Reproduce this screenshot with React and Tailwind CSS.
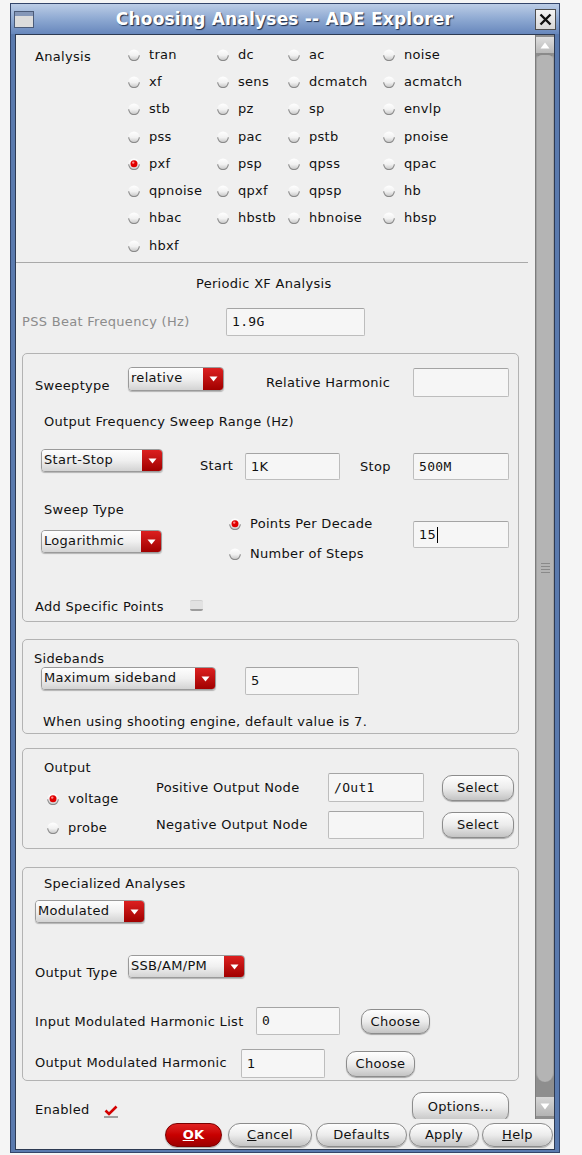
import React from "react";

const Radio = ({ checked }) => (
  <svg width="12" height="12" viewBox="0 0 12 12" className="shrink-0">
    <defs>
      <linearGradient id="radg" x1="0" y1="0" x2="0" y2="1">
        <stop offset="0" stopColor="#ffffff" />
        <stop offset="0.55" stopColor="#f1f1f1" />
        <stop offset="1" stopColor="#c4c4c4" />
      </linearGradient>
    </defs>
    <circle cx="6" cy="6" r="5.6" fill="url(#radg)" />
    <path d="M0.7 6.3 A5.3 5.3 0 0 0 11.3 6.3" fill="none" stroke="#8a8a8a" strokeWidth="1.1" />
    {checked && (
      <>
        <circle cx="6" cy="5.7" r="3.5" fill="#e00000" />
        <circle cx="5.2" cy="4.6" r="1.2" fill="#ff8a8a" />
      </>
    )}
  </svg>
);

const Dropdown = ({ label, className }) => (
  <div className={`flex rounded-[4px] border border-[#9a9a9a] overflow-hidden shadow-[0_1px_1px_rgba(0,0,0,0.25)] ${className}`}>
    <div className="flex-1 flex items-center pl-[2px] pb-[2px] bg-linear-to-b from-[#fefefe] via-[#f0f0f0] to-[#d3d3d3] whitespace-nowrap overflow-hidden">
      {label}
    </div>
    <div className="w-[20px] flex items-center justify-center bg-linear-to-b from-[#dc1f1f] to-[#a10000]">
      <svg width="9" height="6" viewBox="0 0 9 6">
        <path d="M0.5 0.5 L8.5 0.5 L4.5 5.5 Z" fill="#ffffff" />
      </svg>
    </div>
  </div>
);

const Field = ({ value, className = "", mono, children }) => (
  <div
    className={`flex items-center rounded-[2px] border border-[#bdbdbd] border-t-[#a4a4a4] bg-[#f6f6f6] pl-[5px] whitespace-nowrap ${
      mono ? "font-['DejaVu_Sans_Mono',monospace]" : ""
    } ${className}`}
  >
    {value}
    {children}
  </div>
);

const Btn = ({ children, className = "" }) => (
  <div
    className={`flex items-center justify-center rounded-[10px] border border-[#8c8c8c] bg-linear-to-b from-[#fefefe] via-[#ececec] to-[#c4c4c4] shadow-[0_1px_1px_rgba(0,0,0,0.3)] whitespace-nowrap ${className}`}
  >
    {children}
  </div>
);

const analyses = [
  "tran", "dc", "ac", "noise",
  "xf", "sens", "dcmatch", "acmatch",
  "stb", "pz", "sp", "envlp",
  "pss", "pac", "pstb", "pnoise",
  "pxf", "psp", "qpss", "qpac",
  "qpnoise", "qpxf", "qpsp", "hb",
  "hbac", "hbstb", "hbnoise", "hbsp",
  "hbxf",
];

export default function App() {
  return (
    <div className="w-[582px] h-[1155px] bg-[#f5f5f5] font-['DejaVu_Sans',sans-serif] text-[13px] leading-[16px] tracking-[0.3px] text-[#111111] pt-[3px] pl-[10px] overflow-hidden">
      <div className="w-[550px] h-[1150px] flex flex-col border border-[#33456a] bg-[#5a7aae]">
        {/* Title bar */}
        <div className="h-[30px] shrink-0 flex items-center bg-linear-to-b from-[#bccde6] via-[#8ea9d2] to-[#6787bc]">
          <div className="ml-[3px] w-[20px] h-[17px] border border-[#4b5b78] bg-[#dcdcdc] flex flex-col">
            <div className="h-[4px] bg-[#8597b8]" />
          </div>
          <div className="flex-1 text-center text-white font-bold text-[17px] leading-[20px] [text-shadow:1px_1px_1px_#1d2c48] tracking-[0.2px]">
            Choosing Analyses -- ADE Explorer
          </div>
          <div className="mr-[3px] w-[21px] h-[21px] border border-[#4d4d4d] bg-linear-to-b from-[#f4f4f4] to-[#d8d8d8] flex items-center justify-center">
            <svg width="13" height="13" viewBox="0 0 13 13">
              <path d="M1.5 1.5 L11.5 11.5 M11.5 1.5 L1.5 11.5" stroke="#111" strokeWidth="2.4" />
            </svg>
          </div>
        </div>

        {/* Body */}
        <div className="flex-1 flex flex-col px-[4px] pb-[2px]">
          <div className="flex-1 flex flex-col bg-[#efefef] border border-[#2d3a52]">
            {/* Scroll area */}
            <div className="h-[1084px] shrink-0 flex">
              <div className="w-[519px] h-full overflow-hidden flex flex-col">
                {/* Analysis */}
                <div className="h-[227px] shrink-0 flex">
                  <div className="w-[112px] pl-[19px] pt-[14px]">Analysis</div>
                  <div className="pt-[6px] grid grid-cols-[89px_71px_95px_100px] auto-rows-[27.3px]">
                    {analyses.map((a) => (
                      <div key={a} className="flex items-center gap-[9px]">
                        <Radio checked={a === "pxf"} />
                        <span>{a}</span>
                      </div>
                    ))}
                  </div>
                </div>
                <div className="h-px w-[512px] shrink-0 bg-[#a9a9a9]" />

                <div className="mt-[13px] pl-[180px] shrink-0">Periodic XF Analysis</div>

                <div className="mt-[16px] h-[28px] shrink-0 flex items-center">
                  <div className="w-[210px] pl-[6px] text-[#8c8c8c]">PSS Beat Frequency (Hz)</div>
                  <Field value="1.9G" mono className="w-[139px] h-[28px]" />
                </div>

                {/* Sweep group */}
                <div className="mt-[17px] ml-[6px] w-[497px] h-[269px] shrink-0 border border-[#b3b3b3] rounded-[5px] flex flex-col">
                  <div className="mt-[13px] h-[30px] flex">
                    <div className="w-[105px] pl-[12px] pt-[11px]">Sweeptype</div>
                    <Dropdown label="relative" className="w-[96px] h-[24px]" />
                    <div className="w-[189px] pl-[42px] pt-[8px]">Relative Harmonic</div>
                    <Field value="" className="w-[96px] h-[29px] mt-[1px]" />
                  </div>
                  <div className="mt-[17px] pl-[21px]">Output Frequency Sweep Range (Hz)</div>
                  <div className="mt-[19px] h-[31px] flex">
                    <Dropdown label="Start-Stop" className="ml-[18px] w-[122px] h-[23px]" />
                    <div className="w-[82px] pl-[37px] pt-[9px]">Start</div>
                    <Field value="1K" className="w-[95px] h-[27px] mt-[4px]" />
                    <div className="w-[73px] pl-[20px] pt-[10px]">Stop</div>
                    <Field value="500M" mono className="w-[96px] h-[27px] mt-[4px]" />
                  </div>
                  <div className="mt-[22px] pl-[21px]">Sweep Type</div>
                  <div className="h-[42px] flex">
                    <div className="w-[206px] pl-[18px] pt-[12px]">
                      <Dropdown label="Logarithmic" className="w-[121px] h-[23px]" />
                    </div>
                    <div className="w-[184px] flex flex-col">
                      <div className="h-[12px] flex items-center gap-[9px]">
                        <Radio checked />
                        <span>Points Per Decade</span>
                      </div>
                      <div className="mt-[18px] h-[12px] flex items-center gap-[9px]">
                        <Radio />
                        <span>Number of Steps</span>
                      </div>
                    </div>
                    <Field value="15" className="w-[96px] h-[27px] mt-[3px]">
                      <div className="w-px h-[16px] bg-black ml-[1px]" />
                    </Field>
                  </div>
                  <div className="mt-[39px] h-[16px] flex items-center">
                    <div className="w-[167px] pl-[12px]">Add Specific Points</div>
                    <div className="w-[13px] h-[11px] -mt-[3px] rounded-[2px] bg-[#e2e2e2] border-t border-[#cfcfcf] border-b-2 border-b-[#9c9c9c]" />
                  </div>
                </div>

                {/* Sidebands */}
                <div className="mt-[17px] ml-[6px] w-[497px] h-[95px] shrink-0 border border-[#b3b3b3] rounded-[5px] flex flex-col">
                  <div className="mt-[11px] pl-[11px]">Sidebands</div>
                  <div className="flex">
                    <Dropdown label="Maximum sideband" className="ml-[18px] w-[175px] h-[23px]" />
                    <Field value="5" className="ml-[29px] w-[114px] h-[28px]" />
                  </div>
                  <div className="mt-[19px] pl-[20px]">When using shooting engine, default value is 7.</div>
                </div>

                {/* Output */}
                <div className="mt-[14px] ml-[6px] w-[497px] h-[101px] shrink-0 border border-[#b3b3b3] rounded-[5px] flex">
                  <div className="w-[133px] flex flex-col">
                    <div className="mt-[11px] pl-[21px]">Output</div>
                    <div className="mt-[17px] h-[12px] pl-[24px] flex items-center gap-[9px]">
                      <Radio checked />
                      <span>voltage</span>
                    </div>
                    <div className="mt-[17px] h-[12px] pl-[24px] flex items-center gap-[9px]">
                      <Radio />
                      <span>probe</span>
                    </div>
                  </div>
                  <div className="w-[172px] flex flex-col">
                    <div className="mt-[31px]">Positive Output Node</div>
                    <div className="mt-[21px]">Negative Output Node</div>
                  </div>
                  <div className="w-[114px] flex flex-col">
                    <Field value="/Out1" mono className="mt-[24px] w-[96px] h-[29px]" />
                    <Field value="" className="mt-[9px] w-[96px] h-[28px]" />
                  </div>
                  <div className="flex flex-col">
                    <Btn className="mt-[26px] w-[72px] h-[26px]">Select</Btn>
                    <Btn className="mt-[11px] w-[72px] h-[26px]">Select</Btn>
                  </div>
                </div>

                {/* Specialized */}
                <div className="mt-[18px] ml-[6px] w-[497px] h-[214px] shrink-0 border border-[#b3b3b3] rounded-[5px] flex flex-col">
                  <div className="mt-[8px] pl-[21px]">Specialized Analyses</div>
                  <Dropdown label="Modulated" className="mt-[8px] ml-[12px] w-[110px] h-[23px]" />
                  <div className="mt-[32px] h-[23px] flex">
                    <div className="w-[105px] pl-[12px] pt-[10px]">Output Type</div>
                    <Dropdown label="SSB/AM/PM" className="w-[117px] h-[23px]" />
                  </div>
                  <div className="mt-[29px] h-[28px] flex">
                    <div className="w-[233px] pl-[12px] pt-[7px] whitespace-nowrap">Input Modulated Harmonic List</div>
                    <Field value="0" mono className="w-[84px] h-[28px]" />
                    <Btn className="ml-[21px] mt-[2px] w-[69px] h-[25px]">Choose</Btn>
                  </div>
                  <div className="mt-[14px] h-[29px] flex">
                    <div className="w-[218px] pl-[12px] pt-[6px] whitespace-nowrap">Output Modulated Harmonic</div>
                    <Field value="1" className="w-[84px] h-[29px]" />
                    <Btn className="ml-[21px] mt-[2px] w-[69px] h-[26px]">Choose</Btn>
                  </div>
                </div>

                {/* Enabled */}
                <div className="mt-[11px] h-[30px] shrink-0 flex">
                  <div className="w-[88px] pl-[19px] pt-[10px]">Enabled</div>
                  <svg width="14" height="13" viewBox="0 0 14 13" className="mt-[13px]">
                    <path d="M1.5 5.5 L5 9 L12.5 1.5" fill="none" stroke="#d40000" strokeWidth="2.6" />
                    <rect x="0" y="11" width="14" height="2" fill="#a0a0a0" />
                  </svg>
                  <Btn className="ml-[294px] w-[97px] h-[30px]">Options...</Btn>
                </div>
              </div>

              {/* Scrollbar */}
              <div className="w-[19px] h-full flex flex-col bg-[#8e8e8e] border-l border-[#7d7d7d]">
                <div className="mt-[2px] h-[16px] bg-linear-to-b from-[#dedede] to-[#b9b9b9] flex items-center justify-center">
                  <svg width="10" height="7" viewBox="0 0 10 7">
                    <path d="M0.5 6.5 L9.5 6.5 L5 0.5 Z" fill="#ffffff" />
                  </svg>
                </div>
                <div className="h-[1029px] rounded-t-[6px] rounded-b-[9px] bg-[#b4b4b4] border-t-2 border-t-[#8a8a8a] border-x border-x-[#a0a0a0] flex flex-col items-center">
                  <div className="mt-[508px] flex flex-col gap-[2px]">
                    <div className="w-[9px] h-px bg-[#8a8a8a]" />
                    <div className="w-[9px] h-px bg-[#8a8a8a]" />
                    <div className="w-[9px] h-px bg-[#8a8a8a]" />
                    <div className="w-[9px] h-px bg-[#8a8a8a]" />
                  </div>
                </div>
                <div className="mt-[15px] h-[19px] bg-linear-to-b from-[#d6d6d6] to-[#b4b4b4] flex items-center justify-center">
                  <svg width="10" height="7" viewBox="0 0 10 7">
                    <path d="M0.5 0.5 L9.5 0.5 L5 6.5 Z" fill="#ffffff" />
                  </svg>
                </div>
              </div>
            </div>

            {/* Bottom buttons */}
            <div className="flex-1 flex items-start pt-[4px]">
              <div className="ml-[149px] w-[57px] h-[24px] rounded-[12px] border border-[#7a0000] bg-linear-to-b from-[#e02020] via-[#c80000] to-[#9c0000] shadow-[0_1px_1px_rgba(0,0,0,0.3)] flex items-center justify-center text-white font-bold">
                <span><span className="underline">O</span>K</span>
              </div>
              <Btn className="ml-[6px] w-[84px] h-[24px] rounded-[12px]">
                <span><span className="underline">C</span>ancel</span>
              </Btn>
              <Btn className="ml-[4px] w-[91px] h-[24px] rounded-[12px]">Defaults</Btn>
              <Btn className="ml-[2px] w-[70px] h-[24px] rounded-[12px]">Apply</Btn>
              <Btn className="ml-[3px] w-[71px] h-[24px] rounded-[12px]">
                <span><span className="underline">H</span>elp</span>
              </Btn>
            </div>
          </div>
        </div>
      </div>
    </div>
  );
}
